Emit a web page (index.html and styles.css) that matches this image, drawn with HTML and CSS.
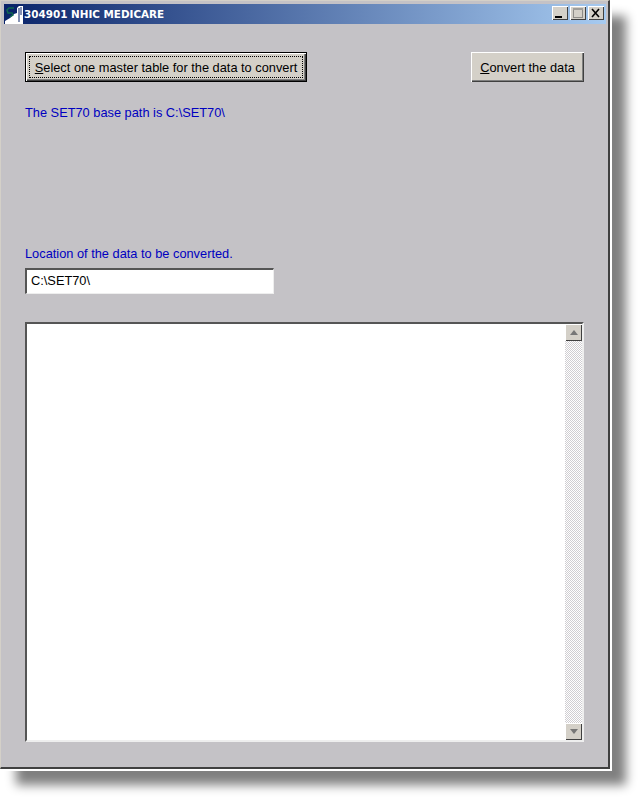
FILE: index.html
```html
<!DOCTYPE html>
<html lang="en">
<head>
    <meta charset="UTF-8">
    <title>304901 NHIC MEDICARE</title>
    <link rel="stylesheet" href="styles.css">
</head>
<body>
    <div class="window">
        <div class="titlebar">
            <svg class="app-icon" width="18" height="19" viewBox="0 0 18 19">
                <rect width="18" height="19" fill="#0a246a"/>
                <path d="M0 19V16L5 13L9 9L12 8V3L14 1H18V19Z" fill="#fff"/>
                <path d="M14 3V17M16 2V10" stroke="#0a246a" stroke-width="1" fill="none"/>
                <path d="M9 3H4L2 5L3 8H7L8 10L5 12" stroke="#0f6a50" stroke-width="1.5" fill="none"/>
            </svg>
            <span class="title-text">304901 NHIC MEDICARE</span>
            <div class="window-controls">
                <div class="ctl-btn">
                    <svg width="16" height="14" viewBox="0 0 16 14"><rect x="3" y="10" width="7" height="2" fill="#000"/></svg>
                </div>
                <div class="ctl-btn">
                    <svg width="16" height="14" viewBox="0 0 16 14"><rect x="3.5" y="2.5" width="9" height="9" fill="none" stroke="#8e8c88"/><rect x="3" y="2" width="10" height="2" fill="#a09e9a"/></svg>
                </div>
                <div class="ctl-btn close-btn">
                    <svg width="16" height="14" viewBox="0 0 16 14"><path d="M4 3L11 11M11 3L4 11" stroke="#000" stroke-width="1.6" fill="none"/></svg>
                </div>
            </div>
        </div>

        <div class="content">
            <div class="button-row">
                <button class="btn btn-default"><span class="focus-box"><u>S</u>elect one master table for the data to convert</span></button>
                <button class="btn btn-convert"><u>C</u>onvert the data</button>
            </div>

            <p class="label base-path">The SET70 base path is C:\SET70\</p>

            <p class="label location">Location of the data to be converted.</p>
            <div class="text-input">C:\SET70\</div>

            <div class="memo">
                <div class="memo-text"></div>
                <div class="scrollbar">
                    <div class="scroll-btn"><span class="arrow-up"></span></div>
                    <div class="scroll-track"></div>
                    <div class="scroll-btn"><span class="arrow-down"></span></div>
                </div>
            </div>
        </div>
    </div>
</body>
</html>
```

FILE: styles.css
```css
html, body {
    margin: 0;
    height: 100%;
    background: #fff;
    overflow: hidden;
}

body {
    font-family: "Liberation Sans", Arial, sans-serif;
    font-size: 12.8px;
    color: #000;
}

.window {
    width: 610px;
    height: 769px;
    box-sizing: border-box;
    background: #c4c2c6;
    border-top: 1px solid #d4d0c8;
    border-left: 1px solid #d4d0c8;
    border-right: 2px solid #404040;
    border-bottom: 2px solid #404040;
    padding: 3px 2px 0 3px;
    outline: 2px solid #fff;
    outline-offset: 0;
    box-shadow: 16px 16px 10px 0 #808080;
}

.titlebar {
    height: 20px;
    display: flex;
    align-items: center;
    background: linear-gradient(to right, #0a246a 0%, #a6caf0 100%);
}

.app-icon {
    margin-left: 1px;
    flex: none;
}

.title-text {
    margin-left: 1px;
    color: #fff;
    font-family: "DejaVu Sans", sans-serif;
    font-weight: bold;
    font-size: 10.4px;
}

.window-controls {
    margin-left: auto;
    margin-right: 2px;
    margin-bottom: 2px;
    display: flex;
    gap: 2px;
}

.ctl-btn {
    width: 16px;
    height: 14px;
    background: #d4d0c8;
    box-shadow: inset 1px 1px 0 #fff, inset -1px -1px 0 #404040;
    display: flex;
}

.content {
    padding: 28px 22px 0 21px;
    display: flex;
    flex-direction: column;
}

.button-row {
    display: flex;
    justify-content: space-between;
    align-items: flex-start;
}

.btn {
    font-family: inherit;
    font-size: 12.8px;
    background: #d4d0c8;
    color: #000;
    padding: 0;
    height: 30px;
    border: none;
    box-shadow: inset 1px 1px 0 #fff, inset -1px -1px 0 #404040, inset -2px -2px 0 #808080;
}

.btn-default {
    width: 282px;
    border: 1px solid #000;
    display: flex;
    align-items: center;
    justify-content: center;
    padding: 3px;
    box-sizing: border-box;
}

.focus-box {
    flex: 1;
    height: 100%;
    box-sizing: border-box;
    border: 1px dotted #000;
    display: flex;
    align-items: center;
    justify-content: center;
    white-space: pre;
}

.btn-convert {
    width: 113px;
}

.label {
    margin: 0;
    color: #0000c0;
    line-height: 16px;
}

.base-path {
    margin-top: 23px;
}

.location {
    margin-top: 125px;
}

.text-input {
    margin-top: 6px;
    width: 249px;
    height: 26px;
    box-sizing: border-box;
    background: #fff;
    border-top: 2px solid #555;
    border-left: 2px solid #555;
    border-right: 1px solid #eee;
    border-bottom: 1px solid #eee;
    padding-left: 4px;
    line-height: 22px;
}

.memo {
    margin-top: 28px;
    width: 559px;
    height: 420px;
    box-sizing: border-box;
    background: #fff;
    border-top: 2px solid #555;
    border-left: 2px solid #555;
    border-right: 2px solid #eee;
    border-bottom: 2px solid #eee;
    display: flex;
}

.memo-text {
    flex: 1;
}

.scrollbar {
    width: 17px;
    display: flex;
    flex-direction: column;
}

.scroll-track {
    flex: 1;
    background: conic-gradient(#fff 25%, #d0ced2 0 50%, #fff 0 75%, #d0ced2 0) 0 0 / 2px 2px;
}

.scroll-btn {
    height: 17px;
    background: #d4d0c8;
    box-shadow: inset 1px 1px 0 #fff, inset -1px -1px 0 #404040;
    display: flex;
    align-items: center;
    justify-content: center;
}

.arrow-up {
    width: 0;
    height: 0;
    border-left: 4px solid transparent;
    border-right: 4px solid transparent;
    border-bottom: 5px solid #777;
}

.arrow-down {
    width: 0;
    height: 0;
    border-left: 4px solid transparent;
    border-right: 4px solid transparent;
    border-top: 5px solid #777;
}
```
